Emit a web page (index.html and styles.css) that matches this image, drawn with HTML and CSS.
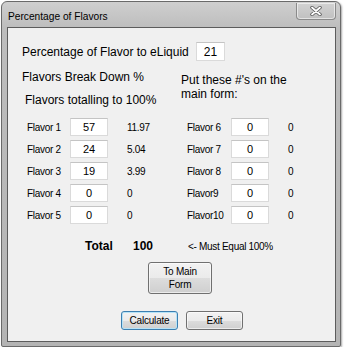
FILE: index.html
```html
<!DOCTYPE html>
<html>
<head>
    <title>Percentage of Flavors</title>
    <link rel="stylesheet" href="styles.css">
</head>
<body>
    <div class="window">
        <div class="titlebar">
            <span class="title">Percentage of Flavors</span>
            <div class="close-btn">
                <svg width="12" height="10" viewBox="0 0 12 10">
                    <path d="M2 1.5 L10 8.5 M10 1.5 L2 8.5" stroke="#555" stroke-width="3.4" stroke-linecap="round"/>
                    <path d="M2 1.5 L10 8.5 M10 1.5 L2 8.5" stroke="#fff" stroke-width="1.8" stroke-linecap="round"/>
                </svg>
            </div>
        </div>

        <div class="client">
            <div class="top-row">
                <label class="big-label">Percentage of Flavor to eLiquid</label>
                <input type="text" class="pct-input" value="21">
            </div>

            <div class="columns">
                <div class="column left-col">
                    <div class="col-head">
                        <div class="head-line first">Flavors Break Down %</div>
                        <div class="head-line second">Flavors totalling to 100%</div>
                    </div>
                    <div class="flavor-row"><span class="flavor-label">Flavor 1</span><input type="text" class="flavor-input" value="57"><span class="flavor-val">11.97</span></div>
                    <div class="flavor-row"><span class="flavor-label">Flavor 2</span><input type="text" class="flavor-input" value="24"><span class="flavor-val">5.04</span></div>
                    <div class="flavor-row"><span class="flavor-label">Flavor 3</span><input type="text" class="flavor-input" value="19"><span class="flavor-val">3.99</span></div>
                    <div class="flavor-row"><span class="flavor-label">Flavor 4</span><input type="text" class="flavor-input" value="0"><span class="flavor-val">0</span></div>
                    <div class="flavor-row"><span class="flavor-label">Flavor 5</span><input type="text" class="flavor-input" value="0"><span class="flavor-val">0</span></div>
                </div>

                <div class="column right-col">
                    <div class="col-head">
                        <div class="put-text">Put these #'s on the<br>main form:</div>
                    </div>
                    <div class="flavor-row"><span class="flavor-label">Flavor 6</span><input type="text" class="flavor-input" value="0"><span class="flavor-val">0</span></div>
                    <div class="flavor-row"><span class="flavor-label">Flavor 7</span><input type="text" class="flavor-input" value="0"><span class="flavor-val">0</span></div>
                    <div class="flavor-row"><span class="flavor-label">Flavor 8</span><input type="text" class="flavor-input" value="0"><span class="flavor-val">0</span></div>
                    <div class="flavor-row"><span class="flavor-label">Flavor9</span><input type="text" class="flavor-input" value="0"><span class="flavor-val">0</span></div>
                    <div class="flavor-row"><span class="flavor-label">Flavor10</span><input type="text" class="flavor-input" value="0"><span class="flavor-val">0</span></div>
                </div>
            </div>

            <div class="total-row">
                <span class="total-label">Total</span>
                <span class="total-value">100</span>
                <span class="total-note">&lt;- Must Equal 100%</span>
            </div>

            <button class="win-btn main-form-btn">To Main<br>Form</button>

            <div class="bottom-buttons">
                <button class="win-btn default-btn">Calculate</button>
                <button class="win-btn">Exit</button>
            </div>
        </div>
    </div>
</body>
</html>
```

FILE: styles.css
```css
body {
    font-family: "Liberation Sans", Arial, sans-serif;
    background-color: #ffffff;
    margin: 0;
    padding: 0;
    color: #000;
}

/* window frame */
.window {
    box-sizing: border-box;
    width: 340px;
    height: 346px;
    margin: 1px 0 0 1px;
    border: 1px solid #6a6a6a;
    border-radius: 6px 6px 2px 2px;
    background: linear-gradient(to bottom, #cfcfcf 0px, #bdbdbd 26px, #b4b4b4 100%);
    padding: 0 4px 4px 5px;
    box-shadow: 1px 1px 2px rgba(0, 0, 0, 0.35);
}

.titlebar {
    height: 25px;
    display: flex;
    align-items: flex-start;
    justify-content: space-between;
}

.title {
    font-size: 10.2px;
    padding: 9px 0 0 1px;
}

.close-btn {
    box-sizing: border-box;
    width: 40px;
    height: 17px;
    margin-top: 1px;
    border: 1px solid #8a8a8a;
    border-top: none;
    border-radius: 0 0 4px 4px;
    background: linear-gradient(to bottom, #d2d2d2, #c0c0c0);
    box-shadow: inset 0 0 0 1px rgba(255, 255, 255, 0.55);
    display: flex;
    align-items: center;
    justify-content: center;
}

/* client area */
.client {
    box-sizing: border-box;
    height: 315px;
    border: 1px solid #5c5c5c;
    background-color: #f0f0f0;
}

.top-row {
    display: flex;
    align-items: center;
    height: 19px;
    margin-top: 14px;
    padding-left: 14px;
}

.big-label {
    font-size: 12px;
    width: 174px;
}

input[type="text"] {
    box-sizing: border-box;
    font-family: "Liberation Sans", Arial, sans-serif;
    background: #fff;
    border: 1px solid #dadada;
    border-top-color: #c4c4c4;
    text-align: center;
    color: #000;
    padding: 0;
    margin: 0;
}

.pct-input {
    width: 29px;
    height: 19px;
    font-size: 12px;
}

.columns {
    display: flex;
}

.column {
    display: flex;
    flex-direction: column;
}

.left-col {
    width: 159px;
    padding-left: 14px;
}

.col-head {
    height: 57px;
    font-size: 12px;
    line-height: 14px;
}

.head-line.first {
    margin-top: 9px;
}

.head-line.second {
    margin-top: 9px;
    padding-left: 3px;
}

.put-text {
    margin-top: 12px;
}

.flavor-row {
    display: flex;
    align-items: center;
    height: 18px;
    margin-bottom: 4px;
    padding-left: 5px;
    font-size: 10px;
    letter-spacing: -0.3px;
}

.right-col .flavor-row {
    padding-left: 6px;
}

.flavor-label {
    width: 43px;
}

.right-col .flavor-label {
    width: 44px;
}

.flavor-input {
    width: 38px;
    height: 18px;
    font-size: 11px;
    letter-spacing: 0;
}

.flavor-val {
    margin-left: 19px;
}

/* total line */
.total-row {
    display: flex;
    align-items: baseline;
    margin-top: 11px;
    padding-left: 77px;
    line-height: 14px;
}

.total-label {
    font-weight: bold;
    font-size: 12px;
    width: 48px;
}

.total-value {
    font-weight: bold;
    font-size: 12px;
    width: 55px;
}

.total-note {
    font-size: 10px;
    letter-spacing: -0.3px;
}

/* buttons */
.win-btn {
    box-sizing: border-box;
    font-family: "Liberation Sans", Arial, sans-serif;
    font-size: 10px;
    letter-spacing: -0.2px;
    color: #000;
    border: 1px solid #707070;
    border-radius: 3px;
    background: linear-gradient(to bottom, #f2f2f2 0%, #ebebeb 50%, #dddddd 50%, #cfcfcf 100%);
    box-shadow: inset 0 0 0 1px rgba(255, 255, 255, 0.6);
    padding: 0;
    cursor: pointer;
}

.main-form-btn {
    display: block;
    width: 64px;
    height: 32px;
    margin: 8px 0 0 140px;
    line-height: 13px;
}

.bottom-buttons {
    display: flex;
    gap: 8px;
    margin: 17px 0 0 113px;
}

.bottom-buttons .win-btn {
    width: 57px;
    height: 19px;
}

.default-btn {
    border-color: #3c7fb1;
    box-shadow: inset 0 0 0 1px #b6e3f7;
}
```
